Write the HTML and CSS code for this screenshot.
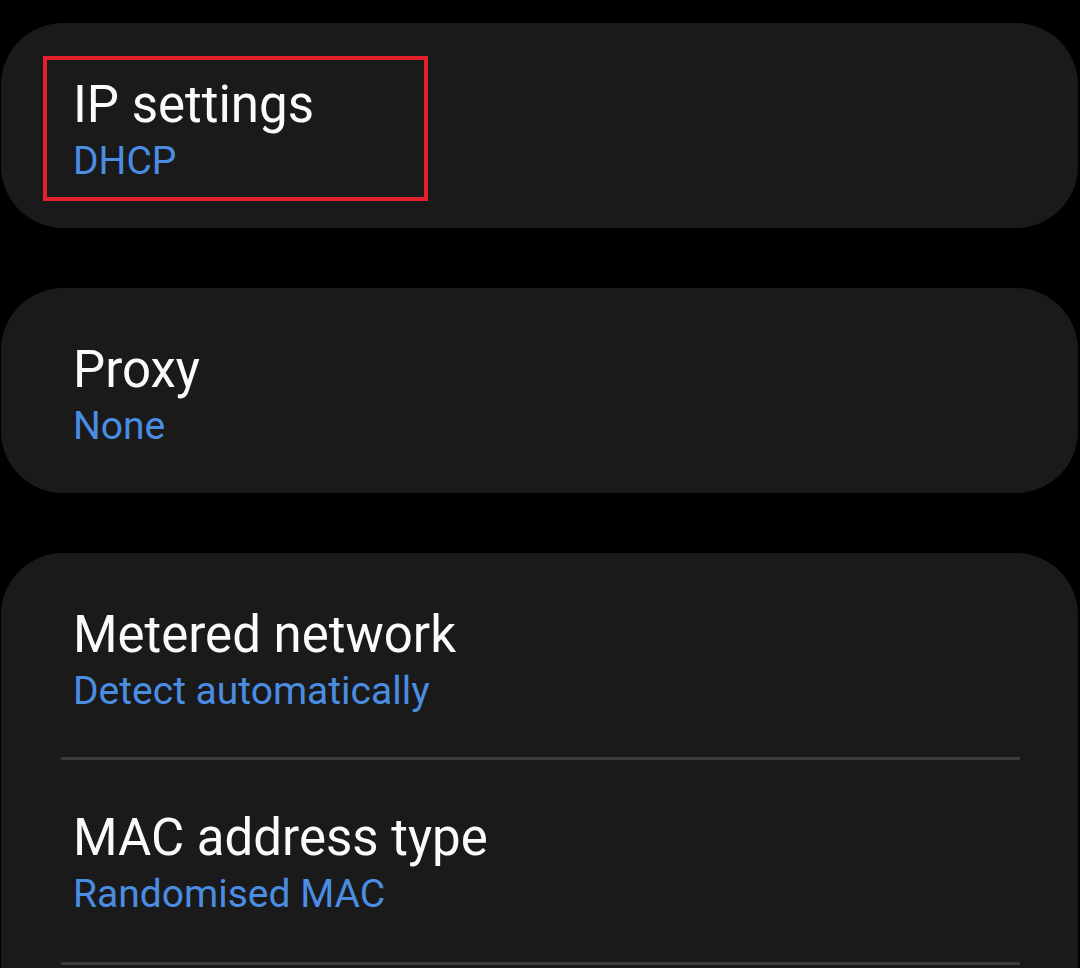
FILE: index.html
```html
<!DOCTYPE html>
<html lang="en">
<head>
<meta charset="utf-8">
<title>Wi-Fi advanced settings</title>
<link rel="stylesheet" href="styles.css">
</head>
<body>
<main class="list">
  <section class="card">
    <div class="row">
      <div class="title">IP settings</div>
      <div class="value">DHCP</div>
    </div>
    <div class="highlight"></div>
  </section>
  <section class="card">
    <div class="row">
      <div class="title">Proxy</div>
      <div class="value">None</div>
    </div>
  </section>
  <section class="card card-open">
    <div class="row row-sep">
      <div class="title">Metered network</div>
      <div class="value">Detect automatically</div>
    </div>
    <div class="row row-sep">
      <div class="title">MAC address type</div>
      <div class="value">Randomised MAC</div>
    </div>
  </section>
</main>
</body>
</html>
```
FILE: styles.css
```css
html, body {
  margin: 0;
  padding: 0;
  background: #000;
  height: 968px;
  overflow: hidden;
}
body {
  font-family: Roboto, "Noto Sans", "Liberation Sans", sans-serif;
  -webkit-font-smoothing: antialiased;
}
.list {
  display: flex;
  flex-direction: column;
  gap: 60px;
  padding: 23px 2px 0 1px;
}
.card {
  position: relative;
  background: #1a1a1a;
  border-radius: 62px;
}
.card-open {
  padding-bottom: 80px;
}
.row {
  padding: 50px 72px 43px 72px;
}
.row-sep {
  position: relative;
  padding-bottom: 45px;
}
.row-sep + .row-sep {
  padding-top: 46px;
  padding-bottom: 47px;
}
.row-sep::after {
  content: "";
  display: block;
  position: absolute;
  left: 60px;
  right: 58px;
  bottom: 0;
  height: 3px;
  background: #3b3b3b;
}
.title {
  color: #fafafa;
  font-size: 51px;
  line-height: 64px;
  font-weight: 400;
}
.value {
  color: #4a8de2;
  font-size: 39px;
  line-height: 48px;
  font-weight: 400;
}
.highlight {
  position: absolute;
  left: 42px;
  top: 33px;
  width: 377px;
  height: 137px;
  border: 4px solid #e3202b;
}
```
